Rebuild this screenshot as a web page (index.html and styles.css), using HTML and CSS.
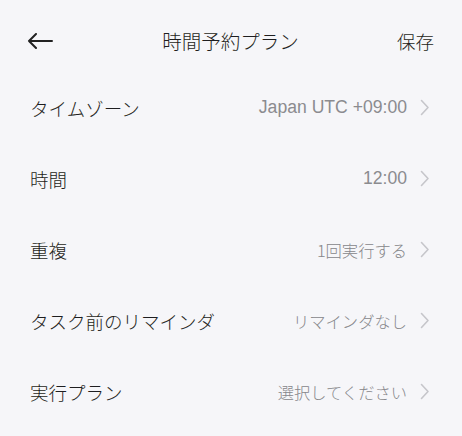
FILE: index.html
```html
<!DOCTYPE html>
<html lang="ja">
<head>
<meta charset="utf-8">
<link rel="stylesheet" href="styles.css">
</head>
<body>
<div class="page">
  <header class="header">
    <button class="back" aria-label="戻る">
      <svg width="26" height="16" viewBox="0 0 26 16"><path d="M25 8H2M9 1L2 8l7 7" fill="none" stroke="#222" stroke-width="2" stroke-linecap="round" stroke-linejoin="round"/></svg>
    </button>
    <div class="title">時間予約プラン</div>
    <div class="save">保存</div>
  </header>
  <ul class="list">
    <li class="row"><span class="label">タイムゾーン</span><span class="value latin">Japan UTC +09:00</span><svg class="chev" width="10" height="17" viewBox="0 0 10 17"><path d="M1.5 1.5L8 8.5l-6.5 7" fill="none" stroke="#c6c6cb" stroke-width="1.6" stroke-linecap="round" stroke-linejoin="round"/></svg></li>
    <li class="row"><span class="label">時間</span><span class="value latin">12:00</span><svg class="chev" width="10" height="17" viewBox="0 0 10 17"><path d="M1.5 1.5L8 8.5l-6.5 7" fill="none" stroke="#c6c6cb" stroke-width="1.6" stroke-linecap="round" stroke-linejoin="round"/></svg></li>
    <li class="row"><span class="label">重複</span><span class="value">1回実行する</span><svg class="chev" width="10" height="17" viewBox="0 0 10 17"><path d="M1.5 1.5L8 8.5l-6.5 7" fill="none" stroke="#c6c6cb" stroke-width="1.6" stroke-linecap="round" stroke-linejoin="round"/></svg></li>
    <li class="row"><span class="label">タスク前のリマインダ</span><span class="value">リマインダなし</span><svg class="chev" width="10" height="17" viewBox="0 0 10 17"><path d="M1.5 1.5L8 8.5l-6.5 7" fill="none" stroke="#c6c6cb" stroke-width="1.6" stroke-linecap="round" stroke-linejoin="round"/></svg></li>
    <li class="row"><span class="label">実行プラン</span><span class="value">選択してください</span><svg class="chev" width="10" height="17" viewBox="0 0 10 17"><path d="M1.5 1.5L8 8.5l-6.5 7" fill="none" stroke="#c6c6cb" stroke-width="1.6" stroke-linecap="round" stroke-linejoin="round"/></svg></li>
  </ul>
</div>
</body>
</html>
```
FILE: styles.css
```css
html, body {
  margin: 0;
  padding: 0;
  background: #f6f6f9;
}
body {
  font-family: "Noto Sans CJK JP", "Noto Sans", sans-serif;
  font-weight: 300;
  color: #1e1e20;
  width: 462px;
  height: 436px;
  overflow: hidden;
}
.page {
  display: flex;
  flex-direction: column;
}
.header {
  display: grid;
  grid-template-columns: 1fr auto 1fr;
  align-items: center;
  height: 34px;
  padding: 24px 28px 0 27px;
}
.back {
  justify-self: start;
  display: flex;
  align-items: center;
  background: none;
  border: 0;
  padding: 0;
  margin: 0;
  height: 34px;
}
.title {
  font-size: 19.5px;
  line-height: 34px;
  color: #1e1e20;
}
.save {
  justify-self: end;
  font-size: 18.5px;
  line-height: 34px;
  color: #1e1e20;
}
.list {
  list-style: none;
  margin: 0;
  padding: 14px 0 0 0;
}
.row {
  display: flex;
  align-items: center;
  height: 71px;
  padding: 0 32px 0 30px;
}
.label {
  font-size: 18.5px;
  flex: 1;
  color: #1e1e20;
}
.value {
  font-size: 16.3px;
  color: #86868a;
  margin-right: 13px;
}
.value.latin {
  font-family: "Liberation Sans", "Noto Sans CJK JP", sans-serif;
  font-weight: 400;
  font-size: 17.6px;
  color: #8b8b8f;
}
.chev {
  display: block;
  flex: none;
}
```
